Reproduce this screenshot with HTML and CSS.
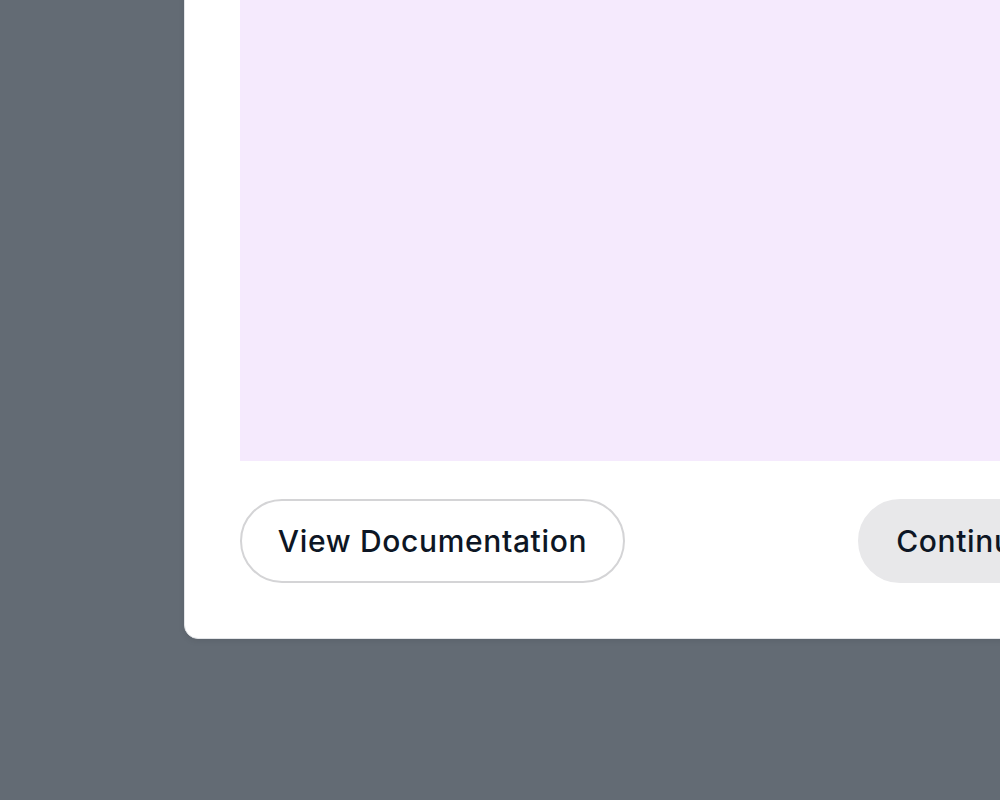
FILE: index.html
```html
<!DOCTYPE html>
<html>
<head>
<meta charset="utf-8">
<link rel="stylesheet" href="styles.css">
</head>
<body>
<div class="stage">
  <div class="modal">
    <div class="preview"></div>
    <div class="actions">
      <button class="btn btn-outline">View Documentation</button>
      <button class="btn btn-muted">Continue</button>
    </div>
  </div>
</div>
</body>
</html>
```
FILE: styles.css
```css
html, body {
  margin: 0;
  padding: 0;
  background: #636b74;
  overflow: hidden;
}
.stage {
  width: 1000px;
  height: 800px;
  overflow: hidden;
  position: relative;
}
.modal {
  margin-left: 184px;
  margin-top: -40px;
  width: 942px;
  box-sizing: border-box;
  background: #ffffff;
  border: 1px solid #e3e5e8;
  border-radius: 14px;
  padding: 39px 56px 55px 55px;
  box-shadow: 0 2px 6px rgba(0,0,0,0.08);
}
.preview {
  height: 461px;
  background: #f5eafd;
}
.actions {
  display: flex;
  justify-content: space-between;
  margin-top: 38px;
}
.btn {
  font-family: Inter, "Open Sans", sans-serif;
  font-size: 30px;
  font-weight: 500;
  color: #0d1624;
  height: 84px;
  border-radius: 42px;
  padding: 0 36px;
  box-sizing: border-box;
  cursor: pointer;
  letter-spacing: 0.65px;
  white-space: nowrap;
  flex-shrink: 0;
}
.btn-outline {
  background: #ffffff;
  border: 2px solid #d4d4d6;
  width: 385px;
  padding: 0;
}
.btn-muted {
  background: #e8e8ea;
  border: 2px solid #e8e8ea;
}
```
